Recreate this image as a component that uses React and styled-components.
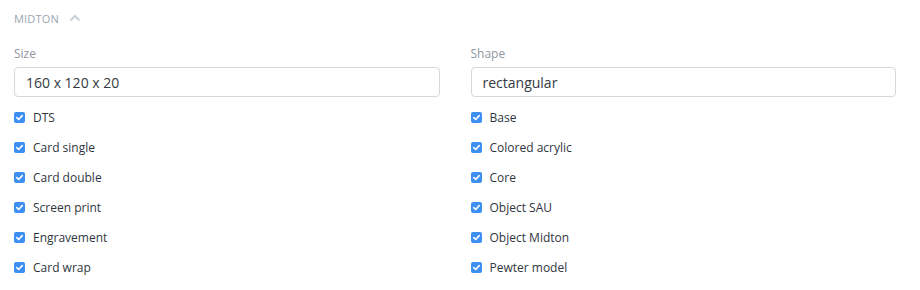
import styled, { createGlobalStyle } from "styled-components";

const GlobalStyle = createGlobalStyle`
  body {
    margin: 0;
    background: #ffffff;
    font-family: "Open Sans", "Noto Sans", sans-serif;
  }
`;

const Panel = styled.div`
  padding: 10px 24px 0 14px;
`;

const SectionHeader = styled.div`
  display: flex;
  align-items: center;
  gap: 10px;
  height: 16px;
  font-size: 11px;
  letter-spacing: 0.2px;
  text-transform: uppercase;
  color: #9aa6b2;
`;

const Columns = styled.div`
  display: grid;
  grid-template-columns: 1fr 1fr;
  column-gap: 31px;
  margin-top: 20px;
`;

const Column = styled.div`
  display: flex;
  flex-direction: column;
`;

const Label = styled.label`
  font-size: 12px;
  line-height: 16px;
  color: #8f979f;
  margin-bottom: 5px;
`;

const Input = styled.input`
  box-sizing: border-box;
  height: 30px;
  width: 100%;
  padding: 0 11px;
  border: 1px solid #d3d8de;
  border-radius: 4px;
  font-family: inherit;
  font-size: 14px;
  color: #333a42;
  outline: none;
  margin-bottom: 5px;
`;

const CheckRow = styled.label`
  display: flex;
  align-items: center;
  gap: 8px;
  height: 30px;
  font-size: 12px;
  color: #2f3640;
`;

const Box = styled.span`
  width: 11px;
  height: 11px;
  border-radius: 2px;
  background: #3d8ff0;
  display: flex;
  align-items: center;
  justify-content: center;
`;

function Check({ children }) {
  return (
    <CheckRow>
      <Box>
        <svg width="9" height="9" viewBox="0 0 10 10">
          <path d="M2 5.2 L4.1 7.2 L8 2.9" fill="none" stroke="#fff" strokeWidth="1.8" strokeLinecap="round" strokeLinejoin="round" />
        </svg>
      </Box>
      {children}
    </CheckRow>
  );
}

const left = ["DTS", "Card single", "Card double", "Screen print", "Engravement", "Card wrap"];
const right = ["Base", "Colored acrylic", "Core", "Object SAU", "Object Midton", "Pewter model"];

export default function App() {
  return (
    <>
      <GlobalStyle />
      <Panel>
        <SectionHeader>
          Midton
          <svg width="12" height="8" viewBox="0 0 12 8">
            <path d="M1.5 6.5 L6 2 L10.5 6.5" fill="none" stroke="#cbd3db" strokeWidth="2.2" />
          </svg>
        </SectionHeader>
        <Columns>
          <Column>
            <Label>Size</Label>
            <Input defaultValue="160 x 120 x 20" />
            {left.map((t) => (
              <Check key={t}>{t}</Check>
            ))}
          </Column>
          <Column>
            <Label>Shape</Label>
            <Input defaultValue="rectangular" />
            {right.map((t) => (
              <Check key={t}>{t}</Check>
            ))}
          </Column>
        </Columns>
      </Panel>
    </>
  );
}
